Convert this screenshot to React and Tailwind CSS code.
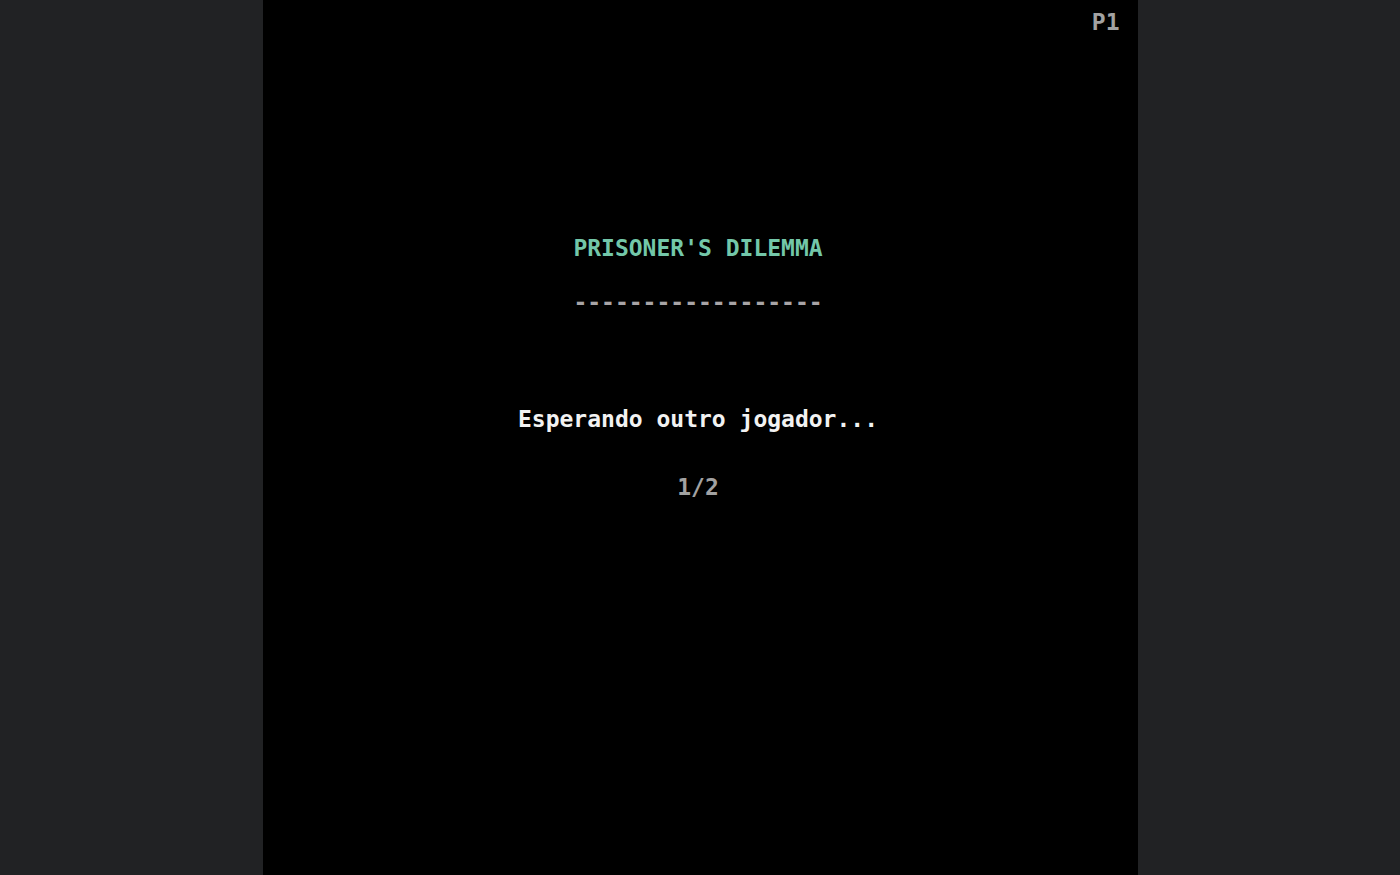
export default function App() {
  return (
    <div className="flex min-h-screen justify-center bg-[#212224] font-['DejaVu_Sans_Mono','Liberation_Mono',monospace] text-[23px] leading-7 font-bold">
      <main className="flex aspect-square min-h-screen flex-col bg-black">
        <header className="flex justify-end pt-2 pr-[18px] text-[#a2a2a2]">
          <span>P1</span>
        </header>
        <section className="flex flex-col items-center pt-[198px] pr-1 whitespace-nowrap">
          <h1 className="text-[#73c7a9]">PRISONER'S DILEMMA</h1>
          <p className="mt-[26px] text-[#a8a4a6]" aria-hidden="true">
            ------------------
          </p>
          <p className="mt-[89px] text-[#f2f2f2]" role="status">
            Esperando outro jogador...
          </p>
          <p className="mt-10 text-[#a2a2a2]">1/2</p>
        </section>
      </main>
    </div>
  );
}
